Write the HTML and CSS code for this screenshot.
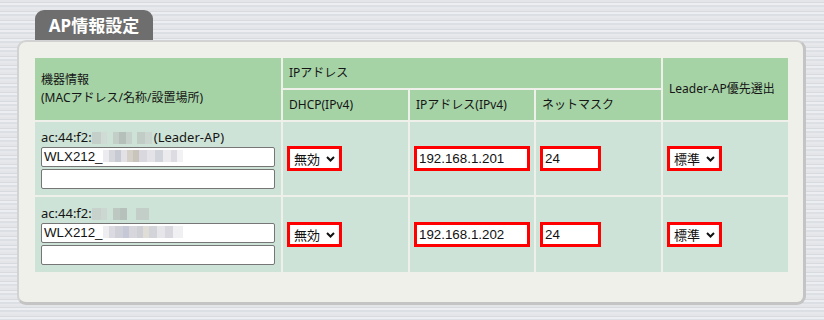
FILE: index.html
```html
<!DOCTYPE html>
<html>
    <head>
        <title>AP情報設定</title>
        <link rel="stylesheet" href="styles.css">
    </head>
    <body>
        <div class="page">
            <div class="tab">AP情報設定</div>
            <div class="panel">
                <table class="ap-table">
                    <colgroup>
                        <col class="c-info">
                        <col class="c-dhcp">
                        <col class="c-ip">
                        <col class="c-mask">
                        <col class="c-leader">
                    </colgroup>
                    <thead>
                        <tr class="head-top">
                            <th rowspan="2">機器情報<br>(MACアドレス/名称/設置場所)</th>
                            <th colspan="3">IPアドレス</th>
                            <th rowspan="2">Leader-AP優先選出</th>
                        </tr>
                        <tr class="head-sub">
                            <th>DHCP(IPv4)</th>
                            <th>IPアドレス(IPv4)</th>
                            <th>ネットマスク</th>
                        </tr>
                    </thead>
                    <tbody>
                        <tr>
                            <td class="info">
                                <div class="mac">ac:44:f2:<span class="blur blur-mac"></span>(Leader-AP)</div>
                                <div class="name-box">WLX212_<span class="blur blur-name"></span></div>
                                <input class="place" type="text">
                            </td>
                            <td><span class="pick">無効<svg width="9" height="6" viewBox="0 0 9 6"><path d="M1 1l3.5 3.5L8 1" fill="none" stroke="#111" stroke-width="2"/></svg></span></td>
                            <td><input class="hl ip" type="text" value="192.168.1.201"></td>
                            <td><input class="hl mask" type="text" value="24"></td>
                            <td><span class="pick">標準<svg width="9" height="6" viewBox="0 0 9 6"><path d="M1 1l3.5 3.5L8 1" fill="none" stroke="#111" stroke-width="2"/></svg></span></td>
                        </tr>
                        <tr class="row-two">
                            <td class="info">
                                <div class="mac">ac:44:f2:<span class="blur blur-mac2"></span></div>
                                <div class="name-box">WLX212_<span class="blur blur-name2"></span></div>
                                <input class="place" type="text">
                            </td>
                            <td><span class="pick">無効<svg width="9" height="6" viewBox="0 0 9 6"><path d="M1 1l3.5 3.5L8 1" fill="none" stroke="#111" stroke-width="2"/></svg></span></td>
                            <td><input class="hl ip" type="text" value="192.168.1.202"></td>
                            <td><input class="hl mask" type="text" value="24"></td>
                            <td><span class="pick">標準<svg width="9" height="6" viewBox="0 0 9 6"><path d="M1 1l3.5 3.5L8 1" fill="none" stroke="#111" stroke-width="2"/></svg></span></td>
                        </tr>
                    </tbody>
                </table>
            </div>
        </div>
    </body>
</html>
```

FILE: styles.css
```css
body {
    margin: 0;
    color: #151515;
    font-family: "Noto Sans", "Noto Sans CJK JP", sans-serif;
    font-size: 12px;
    background: repeating-linear-gradient(180deg, #e3e5e9 0 2px, #d7dade 2px 3px, #eceef1 3px 5px, #dcdfe3 5px 7px, #e6e8eb 7px 9px);
}
.page {
    padding: 10px 0 0 17px;
}
.tab {
    width: 118px;
    height: 30px;
    margin-left: 18px;
    background: #6e6e6e;
    color: #fff;
    font-weight: bold;
    font-size: 17px;
    line-height: 31px;
    text-align: center;
    border-radius: 9px 9px 0 0;
}
.panel {
    width: 789px;
    box-sizing: border-box;
    background: #f0f0ea;
    border: 2px solid #d2d2d2;
    border-right-width: 3px;
    border-bottom-width: 3px;
    border-right-color: #c4c4c4;
    border-bottom-color: #c4c4c4;
    border-radius: 9px;
    padding: 14px 14px 28px 14px;
}
.ap-table {
    width: 757px;
    border-collapse: separate;
    border-spacing: 2px;
    table-layout: fixed;
    font-size: 12px;
}
.c-info { width: 246px; }
.c-dhcp { width: 125px; }
.c-ip { width: 124px; }
.c-mask { width: 125px; }
.c-leader { width: 125px; }
th {
    background: #a6d3a6;
    font-weight: normal;
    text-align: left;
    padding: 0 6px;
    line-height: 18px;
    white-space: nowrap;
}
.head-top th, .head-sub th {
    height: 30px;
}
td {
    background: #cee3d7;
    padding: 0 4px;
    vertical-align: middle;
    line-height: 0;
}
td:first-child {
    padding-left: 5px;
}
td.info {
    padding: 6px;
}
.row-two td.info {
    padding-top: 7px;
    padding-bottom: 7px;
}
.mac {
    font-size: 13px;
    line-height: 18px;
    height: 19px;
}
.blur {
    display: inline-block;
    vertical-align: -2px;
    height: 12px;
}
.blur-mac {
    width: 60px;
    margin-right: 2px;
    background: linear-gradient(90deg, #c3cfc8 0 9px, #cfdbd4 9px 15px, #cee3d7 15px 21px, #c2cec7 21px 27px, #b4c0b9 27px 34px, #c5d1ca 34px 40px, #cee3d7 40px 45px, #c0ccc5 45px 53px, #cad6cf 53px 60px);
}
.blur-mac2 {
    width: 57px;
    background: linear-gradient(90deg, #c6d2cb 0 9px, #cbd7d0 9px 15px, #cee3d7 15px 21px, #bcc8c1 21px 28px, #b5c1ba 28px 35px, #cee3d7 35px 44px, #c2cec7 44px 57px);
}
.name-box, .place {
    display: block;
    box-sizing: border-box;
    width: 234px;
    height: 20px;
    border: 1px solid #767676;
    border-radius: 2px;
    background: #fff;
    font-family: "Liberation Sans", Arial, sans-serif;
    font-size: 13.33px;
    color: #111;
}
.name-box {
    padding: 0 2px;
    line-height: 18px;
    margin-bottom: 2px;
}
.blur-name {
    width: 80px;
    vertical-align: -1px;
    background: linear-gradient(90deg, #ececf0 0 6px, #d6d6dd 6px 12px, #c8cad3 12px 18px, #e2e2e6 18px 24px, #d5d0c8 24px 30px, #c9c4bc 30px 36px, #d8d8de 36px 44px, #e4e4e8 44px 52px, #d2d4dc 52px 60px, #ebebee 60px 68px, #dcdce2 68px 74px, #f2f2f4 74px 80px);
}
.blur-name2 {
    width: 80px;
    vertical-align: -1px;
    background: linear-gradient(90deg, #eeeef1 0 6px, #dadae0 6px 12px, #cfd0d8 12px 20px, #c5c8d6 20px 26px, #d6d6dc 26px 34px, #cfcfd6 34px 40px, #e0dcd6 40px 46px, #d3d3da 46px 54px, #e6e6ea 54px 62px, #d8d8de 62px 70px, #f0f0f2 70px 80px);
}
.place {
    padding: 0;
    outline: none;
}
.hl {
    box-sizing: border-box;
    height: 25px;
    border: 3px solid #ff0000;
    background: #fff;
    font-family: "Liberation Sans", Arial, sans-serif;
    font-size: 13.33px;
    color: #111;
    padding: 0 2px;
    outline: none;
    vertical-align: middle;
}
.ip {
    width: 116px;
}
.mask {
    width: 61px;
}
.pick {
    display: inline-flex;
    align-items: center;
    vertical-align: middle;
    box-sizing: border-box;
    width: 55px;
    height: 25px;
    border: 3px solid #ff0000;
    background: #fff;
    padding-left: 4px;
    font-family: "Noto Sans CJK JP", sans-serif;
    font-size: 13px;
    line-height: 18px;
    color: #111;
}
.pick svg {
    margin-left: 6px;
}
```
